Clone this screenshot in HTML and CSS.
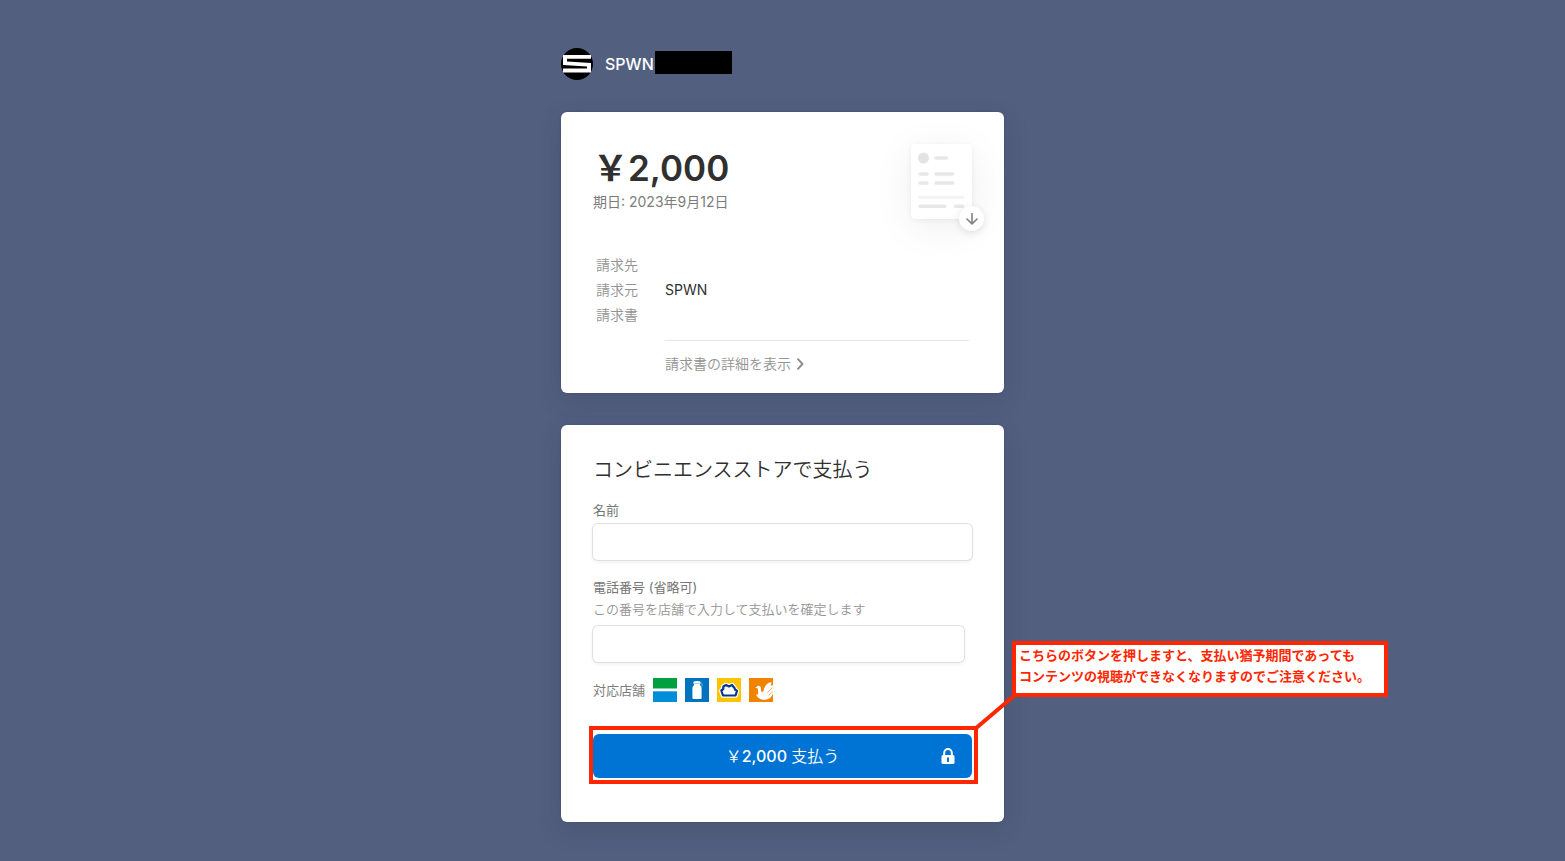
FILE: index.html
```html
<!DOCTYPE html>
<html lang="ja">
<head>
    <meta charset="UTF-8">
    <meta name="viewport" content="width=device-width, initial-scale=1.0">
    <title>SPWN</title>
    <link rel="stylesheet" href="styles.css">
</head>
<body>
    <div class="page">
        <header class="merchant">
            <svg class="merchant-logo" viewBox="0 0 32 32" aria-hidden="true">
                <circle cx="16" cy="16" r="16" fill="#000"/>
                <path d="M30 7v3.800H6v2.600L30 15v9.500H2v-3.900h24v-2.200L2 17V7z" fill="#fff"/>
            </svg>
            <span class="merchant-name">SPWN</span>
            <span class="merchant-mask"></span>
        </header>

        <main>
            <section class="card invoice">
                <div class="invoice-top">
                    <div>
                        <h1 class="amount">&#65509;2,000</h1>
                        <p class="due">期日: 2023年9月12日</p>
                    </div>
                    <button type="button" class="download" aria-label="請求書をダウンロード">
                        <svg class="download-doc" viewBox="0 0 60 75" aria-hidden="true">
                            <circle cx="12.500" cy="14" r="5.500" fill="#e3e3e3"/>
                            <g stroke="#e8e8e8" stroke-width="3.600" stroke-linecap="round">
                                <path d="M25 14h10.500M9 30h7M25 30h16.500M9 39h7M25 39h16.500M9 62.300h25M44.500 62.300h7"/>
                                <path d="M9 53.300h43" stroke="#f3f3f3" stroke-width="3"/>
                            </g>
                        </svg>
                        <span class="download-badge">
                            <svg viewBox="0 0 12 12" width="12" height="12" aria-hidden="true">
                                <path d="M6 .5v10.500M1 6l5 5 5-5" fill="none" stroke="#808080" stroke-width="1.600" stroke-linecap="round" stroke-linejoin="round"/>
                            </svg>
                        </span>
                    </button>
                </div>

                <table class="details">
                    <tr>
                        <th scope="row">請求先</th>
                        <td></td>
                    </tr>
                    <tr>
                        <th scope="row">請求元</th>
                        <td>SPWN</td>
                    </tr>
                    <tr>
                        <th scope="row">請求書</th>
                        <td></td>
                    </tr>
                </table>

                <div class="invoice-more">
                    <a href="#">請求書の詳細を表示
                        <svg viewBox="0 0 8 12" width="8" height="12" aria-hidden="true">
                            <path d="M2 1.200L6.500 6 2 10.800" fill="none" stroke="#8c8c8c" stroke-width="1.900" stroke-linecap="round" stroke-linejoin="round"/>
                        </svg>
                    </a>
                </div>
            </section>

            <section class="card payment">
                <h2>コンビニエンスストアで支払う</h2>
                <form>
                    <div class="field">
                        <label for="name">名前</label>
                        <input type="text" id="name">
                    </div>
                    <div class="field field-phone">
                        <label for="phone">電話番号 (省略可)</label>
                        <p class="hint" id="phoneHint">この番号を店舗で入力して支払いを確定します</p>
                        <input type="tel" id="phone" aria-describedby="phoneHint">
                    </div>

                    <div class="stores">
                        <span>対応店舗</span>
                        <!-- FamilyMart -->
                        <svg viewBox="0 0 24 24" aria-hidden="true">
                            <path fill="#fff" d="M0 0h24v24H0z"/>
                            <path fill="#009f40" d="M0 0h24v10.500H0z"/>
                            <path fill="#008cd6" d="M0 13.300h24V24H0z"/>
                        </svg>
                        <!-- Lawson -->
                        <svg viewBox="0 0 24 24" aria-hidden="true">
                            <path fill="#0073bf" d="M0 0h24v24H0z"/>
                            <path fill="#fff" d="M8.500 3.500q3.500-1 7 0v2l-.7 1.500c1.300 1 1.800 2 1.800 3.500v9.500q0 1-1 1h-7.200q-1 0-1-1v-9.500c0-1.500.5-2.500 1.800-3.500l-.7-1.500z"/>
                            <path d="M9 5.600h6M15.800 4.500l1.200.9v3" fill="none" stroke="#8fbfe2" stroke-width=".8"/>
                        </svg>
                        <!-- Ministop -->
                        <svg viewBox="0 0 24 24" aria-hidden="true">
                            <path fill="#ffc400" d="M0 0h24v24H0z"/>
                            <path d="M6 17.500L4.300 12.500l2-1.500V8.500L9 7l3 1.500L15 7l2.500 3 .5 1.500 2 1.500-1.500 4.500z" fill="#fff" stroke="#fff" stroke-width="4.600" stroke-linejoin="round"/>
                            <path d="M6 17.500L4.300 12.500l2-1.500V8.500L9 7l3 1.500L15 7l2.500 3 .5 1.500 2 1.500-1.500 4.500z" fill="#fff" stroke="#003893" stroke-width="2.200" stroke-linejoin="round"/>
                        </svg>
                        <!-- Seicomart -->
                        <svg viewBox="0 0 24 24" aria-hidden="true">
                            <path fill="#f08300" d="M0 0h24v24H0z"/>
                            <path fill="#fff" d="M6.300 9.700L9 7.800q2.200-.6 2.800 1.400l.2 3.300c.2 1.800 2 2 2.600 0 .8-3.500 2.400-7 7-8.300q1.300-.2.800 1.300l-.8 2.200q1.800-.6 2.400-.1v7.900q-.8 3-3 4.500c-3.500 2.600-8.500 2.200-11.300 0-1.300-1-2.400-2.300-2.700-3.700q1 .5 2 .2c.3-1.800.2-4.600-.5-6.200z"/>
                            <path d="M18.500 14.500l5-5M19.500 17.500l4.500-4" fill="none" stroke="#f08300" stroke-width=".6"/>
                        </svg>
                    </div>

                    <div class="pay">
                        <button type="submit" class="pay-button">
                            <span class="pay-verb">&#65509;</span>2,000 <span class="pay-verb">支払う</span>
                            <svg class="pay-lock" viewBox="0 0 14 16" aria-hidden="true">
                                <path d="M3.200 8V4.800a3.800 3.800 0 0 1 7.600 0V8" fill="none" stroke="#fff" stroke-width="2"/>
                                <rect x=".5" y="7" width="13" height="9" rx="1.500" fill="#fff"/>
                                <path d="M7 10.200v3" stroke="#0074d4" stroke-width="2" stroke-linecap="round"/>
                            </svg>
                        </button>
                        <div class="marker"></div>
                        <svg class="marker-line" viewBox="0 0 44 38" aria-hidden="true">
                            <path d="M2 36L42 2" stroke="#ff2600" stroke-width="4"/>
                        </svg>
                        <p class="callout">こちらのボタンを押しますと、支払い猶予期間であっても<br>コンテンツの視聴ができなくなりますのでご注意ください。</p>
                    </div>
                </form>
            </section>
        </main>
    </div>
</body>
</html>
```
FILE: styles.css
```css
* {
    box-sizing: border-box;
}
body {
    margin: 0;
    background-color: #525f7f;
    font-family: Inter, "Noto Sans CJK JP", sans-serif;
    font-size: 14px;
    color: #303030;
}
h1, h2, p {
    margin: 0;
}
svg {
    display: block;
}
button, input {
    font-family: inherit;
    border: 0;
}
.page {
    max-width: 443px;
    margin: 0 auto;
    padding: 48px 0 39px;
}
.merchant {
    display: flex;
    align-items: center;
    height: 32px;
    margin-bottom: 32px;
    color: white;
}
.merchant-logo {
    width: 32px;
    height: 32px;
    margin-right: 12px;
}
.merchant-name {
    font-size: 16px;
    font-weight: 500;
}
.merchant-mask {
    width: 77px;
    height: 23px;
    margin: 0 0 3px 1px;
    background-color: black;
}
.card {
    background-color: white;
    border-radius: 6px;
    padding: 32px;
    box-shadow: 0 8px 24px rgba(40,48,75,0.2), 0 0 2px rgba(40,48,75,0.3);
}

/* Invoice summary */
.invoice {
    padding-bottom: 18px;
    margin-bottom: 32px;
}
.invoice-top {
    display: flex;
    justify-content: space-between;
    align-items: flex-start;
}
.amount {
    font-size: 35px;
    font-weight: 600;
    line-height: 48px;
}
.due {
    line-height: 20px;
    color: #7d7d7d;
}
.download {
    position: relative;
    width: 61px;
    height: 75px;
    padding: 0;
    background-color: white;
    border-radius: 4px;
    box-shadow: 0 8px 40px rgba(0,0,0,0.07), 0 1px 5px rgba(0,0,0,0.06);
    cursor: pointer;
}
.download-doc {
    width: 60px;
    height: 75px;
}
.download-badge {
    position: absolute;
    right: -12px;
    bottom: -12px;
    display: flex;
    align-items: center;
    justify-content: center;
    width: 25px;
    height: 25px;
    background-color: white;
    border-radius: 50%;
    box-shadow: 0 2px 8px rgba(0,0,0,0.12);
}
.details {
    width: 100%;
    margin-top: 33px;
    border-collapse: collapse;
}
.details th, .details td {
    height: 25px;
    padding: 0;
    line-height: 24px;
    text-align: left;
}
.details th {
    width: 72px;
    padding-left: 3px;
    font-weight: 350;
    color: #949494;
}
.invoice-more {
    margin: 13px 3px 0 72px;
    padding-top: 12px;
    border-top: 1px solid #e6e6e6;
}
.invoice-more a {
    display: flex;
    align-items: center;
    gap: 5px;
    line-height: 22px;
    font-weight: 350;
    color: #949494;
    text-decoration: none;
}

/* Payment form */
.payment {
    padding-bottom: 44px;
}
.payment h2 {
    margin-bottom: 18px;
    font-size: 20px;
    font-weight: 350;
    line-height: 26px;
}
.field {
    margin-bottom: 18px;
    font-size: 13px;
    line-height: 18px;
}
.field label {
    display: block;
    margin-bottom: 5px;
    color: #757575;
}
.field input {
    display: block;
    width: 100%;
    height: 36px;
    padding: 0 12px;
    border-radius: 5px;
    font-size: 16px;
    background-color: white;
    box-shadow: 0 0 0 1px #e0e0e0, 0 2px 4px rgba(0,0,0,0.07);
}
.field-phone {
    margin-bottom: 16px;
}
.field-phone label {
    margin-bottom: 4px;
}
.field-phone input {
    width: calc(100% - 8px);
}
.hint {
    margin-bottom: 8px;
    font-weight: 350;
    color: #949494;
}
.stores {
    display: flex;
    align-items: center;
    gap: 8px;
    margin-bottom: 32px;
    font-size: 13px;
    line-height: 18px;
    color: #7d7d7d;
}
.stores svg {
    width: 24px;
    height: 24px;
}
.pay {
    position: relative;
}
.pay-button {
    position: relative;
    display: block;
    width: 100%;
    height: 44px;
    padding: 0 0 2px;
    border-radius: 6px;
    background-color: #0074d4;
    color: white;
    font-size: 16px;
    font-weight: 500;
    cursor: pointer;
}
.pay-verb {
    font-weight: 350;
}
.pay-lock {
    position: absolute;
    top: 14px;
    right: 17px;
    width: 14px;
    height: 16px;
}

/* Notes drawn over the form */
.marker {
    position: absolute;
    inset: -8px -6px -6px -4px;
    border: 4px solid #ff2600;
    pointer-events: none;
}
.marker-line {
    position: absolute;
    left: calc(100% + 1px);
    bottom: calc(100% + 3px);
    width: 44px;
    height: 38px;
}
.callout {
    position: absolute;
    left: calc(100% + 40px);
    bottom: calc(100% + 37px);
    width: 376px;
    height: 56px;
    padding: 0 3px;
    border: 4px solid #ff2600;
    background-color: white;
    color: #ff2600;
    font-size: 13px;
    font-weight: 700;
    line-height: 21px;
    white-space: nowrap;
}
```
